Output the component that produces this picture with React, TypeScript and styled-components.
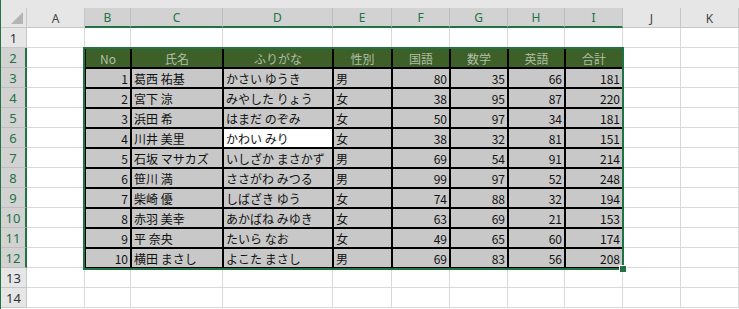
import React from "react";
import styled, { createGlobalStyle, css } from "styled-components";

const GlobalStyle = createGlobalStyle`
  html, body { margin: 0; padding: 0; background: #ffffff; }
  body { font-family: "Noto Sans CJK JP", "Noto Sans", sans-serif; }
`;

const COL_WIDTHS = [26, 58, 46, 92, 110, 59, 58, 58, 57, 58, 58, 58];
const LETTERS = ["A", "B", "C", "D", "E", "F", "G", "H", "I", "J", "K"];
const ROWS = 14;
const GREEN = "#217346";

type Row = [number, string, string, string, number, number, number, number];
const DATA: Row[] = [
  [1, "葛西 祐基", "かさい ゆうき", "男", 80, 35, 66, 181],
  [2, "宮下 涼", "みやした りょう", "女", 38, 95, 87, 220],
  [3, "浜田 希", "はまだ のぞみ", "女", 50, 97, 34, 181],
  [4, "川井 美里", "かわい みり", "女", 38, 32, 81, 151],
  [5, "石坂 マサカズ", "いしざか まさかず", "男", 69, 54, 91, 214],
  [6, "笹川 満", "ささがわ みつる", "男", 99, 97, 52, 248],
  [7, "柴崎 優", "しばざき ゆう", "女", 74, 88, 32, 194],
  [8, "赤羽 美幸", "あかばね みゆき", "女", 63, 69, 21, 153],
  [9, "平 奈央", "たいら なお", "女", 49, 65, 60, 174],
  [10, "横田 まさし", "よこた まさし", "男", 69, 83, 56, 208],
];
const HEADERS = ["No", "氏名", "ふりがな", "性別", "国語", "数学", "英語", "合計"];

const Window = styled.div`
  width: 738px;
  height: 309px;
  border-left: 1px solid ${GREEN};
  overflow: hidden;
  background: #fff;
`;

const TopStrip = styled.div`
  height: 8px;
  background: #e6e6e6;
`;

const Grid = styled.div`
  position: relative;
  display: grid;
  grid-template-columns: ${COL_WIDTHS.map((w) => `${w}px`).join(" ")};
  grid-auto-rows: 20px;
`;

const HeaderBase = css`
  box-sizing: border-box;
  display: flex;
  align-items: center;
  justify-content: center;
  font-family: "Noto Sans", "Liberation Sans", sans-serif;
  font-size: 12px;
  border-right: 1px solid #c6c6c6;
  border-bottom: 1px solid #c6c6c6;
`;

const Corner = styled.div`
  ${HeaderBase};
  position: relative;
  background: #e6e6e6;
  svg { position: absolute; right: 3px; bottom: 3px; }
`;

const ColHeader = styled.div<{ $sel: boolean }>`
  ${HeaderBase};
  padding-top: 1px;
  background: ${(p) => (p.$sel ? "#d2d2d2" : "#e6e6e6")};
  color: ${(p) => (p.$sel ? GREEN : "#444")};
  ${(p) =>
    p.$sel &&
    css`
      border-bottom: 2px solid ${GREEN};
      border-right-color: #bdbdbd;
    `}
`;

const RowHeader = styled.div<{ $sel: boolean }>`
  ${HeaderBase};
  font-size: 13px;
  background: ${(p) => (p.$sel ? "#d2d2d2" : "#e6e6e6")};
  color: ${(p) => (p.$sel ? GREEN : "#333")};
  ${(p) =>
    p.$sel &&
    css`
      border-right: 2px solid ${GREEN};
      border-bottom-color: #bdbdbd;
    `}
`;

const EmptyCell = styled.div`
  box-sizing: border-box;
  border-right: 1px solid #d9d9d9;
  border-bottom: 1px solid #d9d9d9;
`;

type Kind = "head" | "data" | "active";

const TableCell = styled.div<{ $kind: Kind; $align: "left" | "right" | "center" }>`
  box-sizing: border-box;
  border: 1px solid #000;
  display: flex;
  align-items: center;
  justify-content: ${(p) =>
    p.$align === "left" ? "flex-start" : p.$align === "right" ? "flex-end" : "center"};
  padding: 1px 2px 0 2px;
  font-size: 12px;
  line-height: 17px;
  white-space: nowrap;
  overflow: hidden;
  color: ${(p) => (p.$kind === "head" ? "#b0bfa6" : "#111")};
  background: ${(p) =>
    p.$kind === "head" ? "#3d5f28" : p.$kind === "active" ? "#ffffff" : "#c8c8c8"};
`;

const SelectionFrame = styled.div`
  position: absolute;
  left: 82px;
  top: 39px;
  width: 541px;
  height: 223px;
  box-sizing: border-box;
  border: 2px solid ${GREEN};
  pointer-events: none;
`;

const FillHandle = styled.div`
  position: absolute;
  right: -5px;
  bottom: -5px;
  width: 6px;
  height: 6px;
  background: ${GREEN};
  border: 1px solid #fff;
`;

function CornerTriangle() {
  return (
    <svg width="12" height="12" viewBox="0 0 12 12">
      <polygon points="12,0 12,12 0,12" fill="#b4b4b4" />
    </svg>
  );
}

export default function App() {
  const cells: React.ReactNode[] = [];
  cells.push(
    <Corner key="corner">
      <CornerTriangle />
    </Corner>
  );
  LETTERS.forEach((l, i) => {
    const sel = i >= 1 && i <= 8;
    cells.push(
      <ColHeader key={`ch-${l}`} $sel={sel}>
        {l}
      </ColHeader>
    );
  });

  for (let r = 1; r <= ROWS; r++) {
    const rowSel = r >= 2 && r <= 12;
    cells.push(
      <RowHeader key={`rh-${r}`} $sel={rowSel}>
        {r}
      </RowHeader>
    );
    for (let c = 0; c < LETTERS.length; c++) {
      const key = `${LETTERS[c]}${r}`;
      const inTable = r >= 2 && r <= 12 && c >= 1 && c <= 8;
      if (!inTable) {
        cells.push(<EmptyCell key={key} />);
        continue;
      }
      const col = c - 1;
      if (r === 2) {
        cells.push(
          <TableCell key={key} $kind="head" $align="center">
            {HEADERS[col]}
          </TableCell>
        );
      } else {
        const row = DATA[r - 3];
        const value = row[col];
        const isNum = typeof value === "number";
        const active = r === 6 && col === 2;
        cells.push(
          <TableCell key={key} $kind={active ? "active" : "data"} $align={isNum ? "right" : "left"}>
            {value}
          </TableCell>
        );
      }
    }
  }

  return (
    <>
      <GlobalStyle />
      <Window>
        <TopStrip />
        <Grid>
          {cells}
          <SelectionFrame>
            <FillHandle />
          </SelectionFrame>
        </Grid>
      </Window>
    </>
  );
}
